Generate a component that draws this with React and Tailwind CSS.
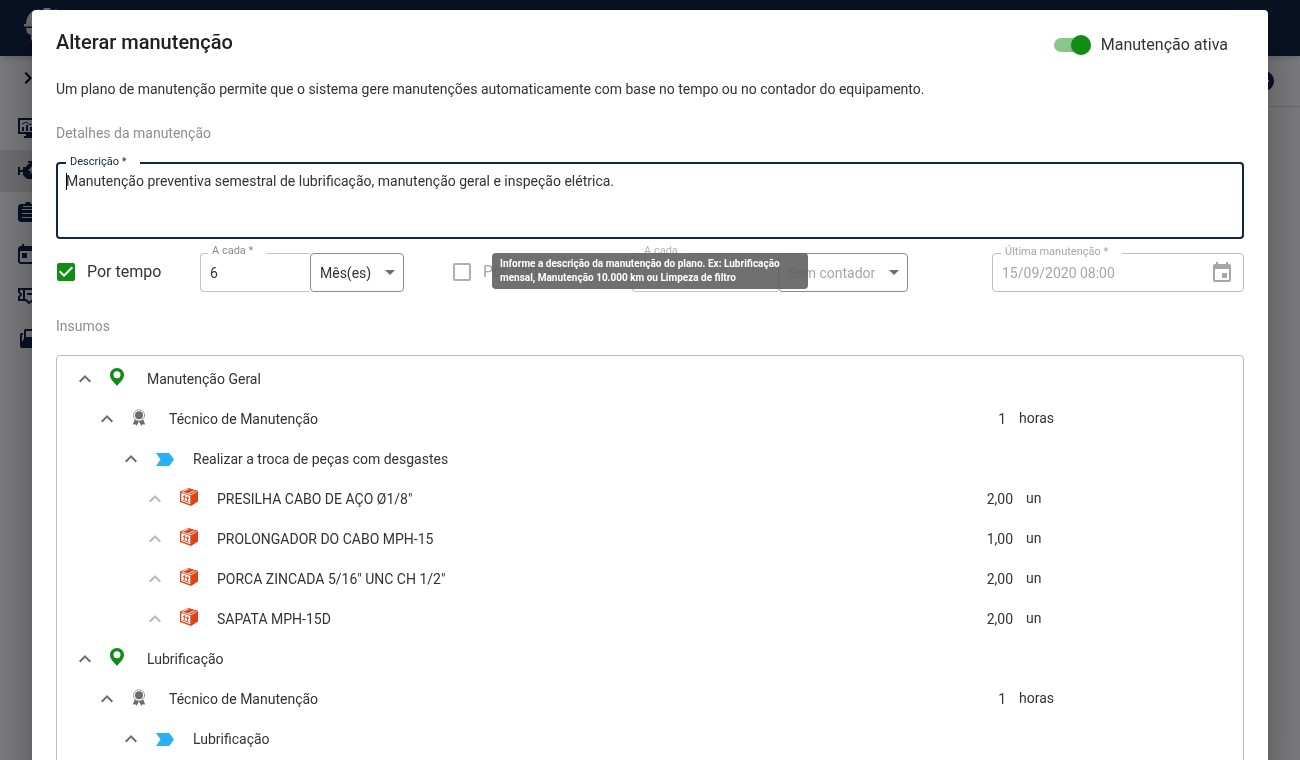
import React, { useState } from "react";
import {
  MdAddCircle,
  MdArrowDropDown,
  MdCheckBox,
  MdCheckBoxOutlineBlank,
  MdChevronRight,
  MdEvent,
  MdExpandLess,
} from "react-icons/md";

const rows = [
  { level: 0, type: "place", name: "Manutenção Geral" },
  { level: 1, type: "worker", name: "Técnico de Manutenção", qty: "1", unit: "horas" },
  { level: 2, type: "task", name: "Realizar a troca de peças com desgastes" },
  { level: 3, type: "part", name: 'PRESILHA CABO DE AÇO Ø1/8"', qty: "2,00", unit: "un" },
  { level: 3, type: "part", name: "PROLONGADOR DO CABO MPH-15", qty: "1,00", unit: "un" },
  { level: 3, type: "part", name: 'PORCA ZINCADA 5/16" UNC CH 1/2"', qty: "2,00", unit: "un" },
  { level: 3, type: "part", name: "SAPATA MPH-15D", qty: "2,00", unit: "un" },
  { level: 0, type: "place", name: "Lubrificação" },
  { level: 1, type: "worker", name: "Técnico de Manutenção", qty: "1", unit: "horas" },
  { level: 2, type: "task", name: "Lubrificação" },
];

const indents = ["pl-4", "pl-[38px]", "pl-[62px]", "pl-[86px]"];

/*
==========================
ICONS
==========================
*/

function HelmetLogo() {
  return (
    <svg viewBox="0 0 46 40" className="w-[46px] h-10" fill="#d8d4d2">
      <path d="M2 17C2 9 6 4 11 2v8l2-1V1.500h2.500V8h4V0h7v8h4V1.500H33V9l2 1V2c5 2 9 7 9 15z" />
      <path d="M0 16h46v2.500H0zM2 20h42v3l-3 4c0 5-4 9-8 10-3 1-7 2-9 2-5 0-11-2-14-4-3-2-4-5-3-8l-4-2z" />
    </svg>
  );
}

function MonitorIcon() {
  return (
    <svg viewBox="0 0 24 20" className="w-6 h-5" fill="#102347">
      <path d="M0 0h24v16H0zM2 2v12h20V2z" fillRule="evenodd" />
      <path d="M4 9h2v4H4zM8 7h2v6H8zM12 9h2v4h-2zM16 6h2v7h-2zM8 16h8v2h2v2H6v-2h2z" />
      <path d="M4 6l4-2 4 3 6-4" fill="none" stroke="#102347" />
    </svg>
  );
}

function EngineIcon() {
  return (
    <svg viewBox="0 0 26 18" className="w-[26px] h-[18px]" fill="#102347">
      <path d="M0 6h2v8H0zM2 9h3v2H2zM5 6h3l2-3h2V2h-2V0h9v2h-4v1h2l4 3h5v9h-3l-2 3H9l-4-4z" />
      <path d="M14 5l-4 5h3l-1 4 5-6h-3z" fill="#d6d6da" />
    </svg>
  );
}

function ClipboardIcon() {
  return (
    <svg viewBox="0 0 20 20" className="w-5 h-5" fill="#102347">
      <path d="M2 2h5l1-2h4l1 2h5l2 2v14l-2 2H2l-2-2V4z" />
      <path d="M4 7.500h12M4 11.500h12M4 15.500h12M5 4.500h10" stroke="#ececf1" />
    </svg>
  );
}

function CalendarIcon() {
  return (
    <svg viewBox="0 0 20 20" className="w-5 h-5" fill="#102347">
      <path
        d="M4 0h2v2h8V0h2v2h2l2 2v14l-2 2H2l-2-2V4l2-2h2zM2 7v11h16V7z"
        fillRule="evenodd"
      />
      <path d="M4 9h5v5H4z" />
    </svg>
  );
}

function TicketIcon() {
  return (
    <svg viewBox="0 0 24 18" className="w-6 h-[18px]" fill="none" stroke="#102347" strokeWidth="2">
      <path d="M1 2h22v11h-8l-4 3-3-3H1v-3l2-2.500L1 5zM6 2v11M9 7h8" />
    </svg>
  );
}

function FolderIcon() {
  return (
    <svg viewBox="0 0 24 20" className="w-6 h-5" fill="#102347">
      <path d="M7 1h15v12H6V2zM8 3v6h12V3z" fillRule="evenodd" />
      <path d="M3 5h2v2H4v7L7 9h17l-3 11H3l-1-2V6z" />
    </svg>
  );
}

function PinIcon() {
  return (
    <svg viewBox="0 0 14 18" className="w-3.5 h-[18px]">
      <path
        d="M7 0C3 0 0 3 0 7c0 4.500 4.500 7.500 7 11 2.500-3.500 7-6.500 7-11 0-4-3-7-7-7zm0 3.300a3.500 3.500 0 1 1 0 7 3.500 3.500 0 0 1 0-7z"
        fill="#118d15"
        fillRule="evenodd"
      />
    </svg>
  );
}

function BadgeIcon() {
  return (
    <svg viewBox="0 0 14 17" className="w-3.5 h-[17px]">
      <path d="M3 10L.8 15.500l2.400-.3 1.400 1.600L7 12.500l2.400 4.300 1.400-1.600 2.400.3L11 10z" fill="#6b6b6b" />
      <circle cx="7" cy="6.300" r="6" fill="#fff" />
      <circle cx="7" cy="6.300" r="5.500" fill="none" stroke="#777" strokeDasharray="1.400 .5" />
      <circle cx="7" cy="6.300" r="4" fill="#6b6b6b" />
    </svg>
  );
}

function TaskIcon() {
  return (
    <svg viewBox="0 0 18 13" className="w-[18px] h-[13px]">
      <path d="M0 0h12.500c.6 0 1 .3 1.300.7L18 6.500l-4.200 5.800c-.3.400-.7.700-1.300.7H0l4.500-6.500z" fill="#29b0f6" />
    </svg>
  );
}

function BoxIcon() {
  return (
    <svg viewBox="0 0 18 18" className="w-[18px] h-[18px]">
      <path d="M8.500 0L18 2.800v10.700L11 18 0 14V3.500z" fill="#dc4518" />
      <path d="M1.300 5l9 2.900v8.300l-9-3.200z" fill="#fff" />
      <path
        d="M4.300 12V7.600M3 9.300l1.300-1.700 1.300 2.400M7.500 13.100V8.700M6.200 10.400l1.300-1.700 1.300 2.400M2.500 12.100l6.800 2.300"
        fill="none"
        stroke="#dc4518"
        strokeWidth=".9"
      />
      <path d="M1.500 3.900l9.400 3 5.800-3.500" fill="none" stroke="#fff" strokeWidth=".8" />
      <path d="M8.500 1L3 3.200M14.500 2.600L8.500 5.500" fill="none" stroke="#fff" strokeWidth=".9" />
    </svg>
  );
}

function RowIcon({ type }) {
  if (type === "place") return <PinIcon />;
  if (type === "worker") return <BadgeIcon />;
  if (type === "task") return <TaskIcon />;
  return <BoxIcon />;
}

/*
==========================
PAGE BEHIND THE DIALOG
==========================
*/

function Shell() {
  const items = [
    { label: "Painel", icon: <MonitorIcon /> },
    { label: "Equipamentos", icon: <EngineIcon />, active: true },
    { label: "Ordens", icon: <ClipboardIcon /> },
    { label: "Agenda", icon: <CalendarIcon /> },
    { label: "Chamados", icon: <TicketIcon /> },
    { label: "Arquivos", icon: <FolderIcon /> },
  ];

  return (
    <div className="h-screen flex flex-col bg-[#f4f3fa]" aria-hidden="true">
      <header className="relative h-14 shrink-0 bg-[#122545] shadow-md flex items-center pl-6">
        <HelmetLogo />
      </header>
      <div className="flex flex-1">
        <nav className="w-14 shrink-0">
          <button type="button" tabIndex={-1} className="h-[52px] w-full pl-4 pb-2 flex items-center" aria-label="Expandir">
            <MdChevronRight className="w-6 h-6 text-black" stroke="currentColor" />
          </button>
          {items.map((item) => (
            <a
              key={item.label}
              href="#"
              tabIndex={-1}
              aria-label={item.label}
              className={`h-[42px] pl-[18px] pb-[3px] flex items-center ${item.active ? "bg-[#dcdce0]" : ""}`}
            >
              {item.icon}
            </a>
          ))}
        </nav>
        <main className="flex-1">
          <div className="h-[51px] border-b border-[#d0d0d4] flex items-center justify-end pr-6">
            <MdAddCircle className="w-6 h-6 text-[#122545]" />
          </div>
        </main>
      </div>
    </div>
  );
}

/*
==========================
FORM PARTS
==========================
*/

function FieldLabel({ htmlFor, color = "text-[#8a8a8a]", children }) {
  return (
    <label
      htmlFor={htmlFor}
      className={`absolute left-2 -top-2 pl-1 pr-3.5 bg-white text-[11px] leading-3 whitespace-nowrap ${color}`}
    >
      {children}
    </label>
  );
}

function Check({ label, checked, disabled, onChange }) {
  return (
    <label
      className={`h-[38px] flex items-center gap-[9px] -ml-0.5 text-base whitespace-nowrap ${disabled ? "text-[#a6a6a6]" : "text-[#333]"}`}
    >
      <input type="checkbox" className="sr-only" checked={checked} disabled={disabled} onChange={onChange} />
      {checked ? (
        <MdCheckBox className="w-6 h-6 text-[#118d15]" />
      ) : (
        <MdCheckBoxOutlineBlank className="w-6 h-6 text-[#b0b0b0]" />
      )}
      {label}
    </label>
  );
}

function UnitSelect({ label, options, disabled, className }) {
  return (
    <div className={`relative shrink-0 border border-[#8c8c8c] rounded ${className}`}>
      <select
        aria-label={label}
        disabled={disabled}
        className={`appearance-none w-full h-full pl-[9px] pr-6 text-sm bg-transparent opacity-100 ${disabled ? "text-[#a6a6a6]" : "text-[#333]"}`}
      >
        {options.map((o) => (
          <option key={o}>{o}</option>
        ))}
      </select>
      <MdArrowDropDown className="absolute right-px top-1.5 w-6 h-6 text-[#6b6b6b] pointer-events-none" />
    </div>
  );
}

function TreeRow({ row }) {
  const isPart = row.level === 3;
  const isDeep = row.level >= 2;

  return (
    <li className={`h-10 flex items-center text-sm text-[#333] ${indents[row.level]}`}>
      <button type="button" aria-label="Recolher" className="w-6 h-6 shrink-0">
        <MdExpandLess className={`w-6 h-6 ${isPart ? "text-[#b8b8b8]" : "text-[#6b6b6b]"}`} />
      </button>
      <span className={`flex justify-center shrink-0 ${isDeep ? "w-11" : "w-10"} ${row.type === "task" ? "" : "pb-1"}`}>
        <RowIcon type={row.type} />
      </span>
      <span className={`flex-1 ${isDeep ? "pl-1.5" : "pl-2.5"}`}>{row.name}</span>
      {row.qty && (
        <>
          <span className="pr-[13px]">{row.qty}</span>
          <span className={`pb-0.5 ${isPart ? "w-[217px]" : "w-56"}`}>{row.unit}</span>
        </>
      )}
    </li>
  );
}

export default function App() {
  const [active, setActive] = useState(true);
  const [byTime, setByTime] = useState(true);
  const [description, setDescription] = useState(
    "Manutenção preventiva semestral de lubrificação, manutenção geral e inspeção elétrica.",
  );
  const [every, setEvery] = useState("6");

  return (
    <div className="h-screen overflow-hidden font-['Roboto',sans-serif] text-[#333]">
      <Shell />

      {/* BACKDROP */}
      <div className="fixed inset-0 overflow-hidden bg-black/50 px-8 pt-2.5">
        <div
          role="dialog"
          aria-labelledby="dialog-title"
          className="min-h-full bg-white rounded px-6 pt-4 shadow-[0_11px_15px_-7px_rgba(0,0,0,0.2),0_24px_38px_3px_rgba(0,0,0,0.14),0_9px_46px_8px_rgba(0,0,0,0.12)]"
        >
          <div className="flex items-start justify-between">
            <h2 id="dialog-title" className="text-xl leading-8 font-medium text-[#212121]">
              Alterar manutenção
            </h2>
            <label className="h-[38px] pr-4 flex items-center gap-2.5 text-base">
              <input
                type="checkbox"
                role="switch"
                className="sr-only"
                checked={active}
                onChange={() => setActive((prev) => !prev)}
              />
              <span className="relative w-[37px] h-5 flex items-center">
                <span className={`w-[34px] h-3.5 rounded-full ${active ? "bg-[#88c68a]" : "bg-gray-300"}`} />
                <span
                  className={`absolute top-0 w-5 h-5 rounded-full shadow ${active ? "right-0 bg-[#118d15]" : "left-0 bg-white"}`}
                />
              </span>
              Manutenção ativa
            </label>
          </div>

          <p className="mt-[13px] text-sm leading-6">
            Um plano de manutenção permite que o sistema gere manutenções automaticamente com base no tempo ou no
            contador do equipamento.
          </p>

          <h3 className="mt-[22px] text-sm leading-5 text-[#8f8f8f]">Detalhes da manutenção</h3>

          {/* DESCRIPTION */}
          <div className="relative mt-[19px] h-[77px] border-2 border-[#122545] rounded">
            <FieldLabel htmlFor="description" color="text-[#122545]">
              Descrição *
            </FieldLabel>
            <textarea
              id="description"
              aria-describedby="description-tip"
              value={description}
              onChange={(e) => setDescription(e.target.value)}
              className="block w-full h-full px-2 py-[7px] text-sm leading-5 resize-none outline-none bg-transparent"
            />
            <span className="absolute left-2 top-[9px] w-px h-[17px] bg-black" />
            <div
              id="description-tip"
              role="tooltip"
              className="absolute z-10 left-1/2 -translate-x-1/2 top-full mt-4 w-[316px] px-2 py-1 rounded bg-[#616161]/90 text-white text-[10px] leading-[14px] font-bold"
            >
              Informe a descrição da manutenção do plano. Ex: Lubrificação mensal, Manutenção 10.000 km ou Limpeza de
              filtro
            </div>
          </div>

          {/* INTERVAL */}
          <div className="mt-3.5 grid grid-cols-[4fr_7fr_5fr_10fr_7fr]">
            <Check label="Por tempo" checked={byTime} onChange={() => setByTime((prev) => !prev)} />

            <div className="relative flex h-[39px] min-w-0 pr-12">
              <FieldLabel htmlFor="every-time">A cada *</FieldLabel>
              <input
                id="every-time"
                value={every}
                onChange={(e) => setEvery(e.target.value)}
                className="flex-1 min-w-0 px-[9px] text-sm border border-r-0 border-[#c4c4c4] rounded-l outline-none"
              />
              <UnitSelect label="Unidade" options={["Mês(es)", "Dia(s)", "Ano(s)"]} className="w-[94px]" />
            </div>

            <Check label="Por contador" checked={false} disabled onChange={() => {}} />

            <div className="relative flex h-[39px] min-w-0 pr-[84px]">
              <FieldLabel htmlFor="every-counter" color="text-[#b0b0b0]">
                A cada
              </FieldLabel>
              <input
                id="every-counter"
                disabled
                className="flex-1 min-w-0 px-[9px] text-sm border border-r-0 border-[#c4c4c4] rounded-l"
              />
              <UnitSelect label="Contador" options={["Sem contador"]} disabled className="w-[130px]" />
            </div>

            <div className="relative flex items-center h-[39px] min-w-0 pr-[9px] border border-[#bdbdbd] rounded">
              <FieldLabel htmlFor="last" color="text-[#a6a6a6]">
                Última manutenção *
              </FieldLabel>
              <input
                id="last"
                disabled
                defaultValue="15/09/2020 08:00"
                className="flex-1 min-w-0 px-[9px] text-sm text-[#a6a6a6]"
              />
              <MdEvent className="w-6 h-6 text-[#a6a6a6]" />
            </div>
          </div>

          <h3 className="mt-6 text-sm leading-5 text-[#8f8f8f]">Insumos</h3>

          {/* SUPPLIES TREE */}
          <ul className="mt-[19px] pt-[3px] pb-4 border border-[#bdbdbd] rounded">
            {rows.map((row, i) => (
              <TreeRow key={i} row={row} />
            ))}
          </ul>
        </div>
      </div>
    </div>
  );
}
